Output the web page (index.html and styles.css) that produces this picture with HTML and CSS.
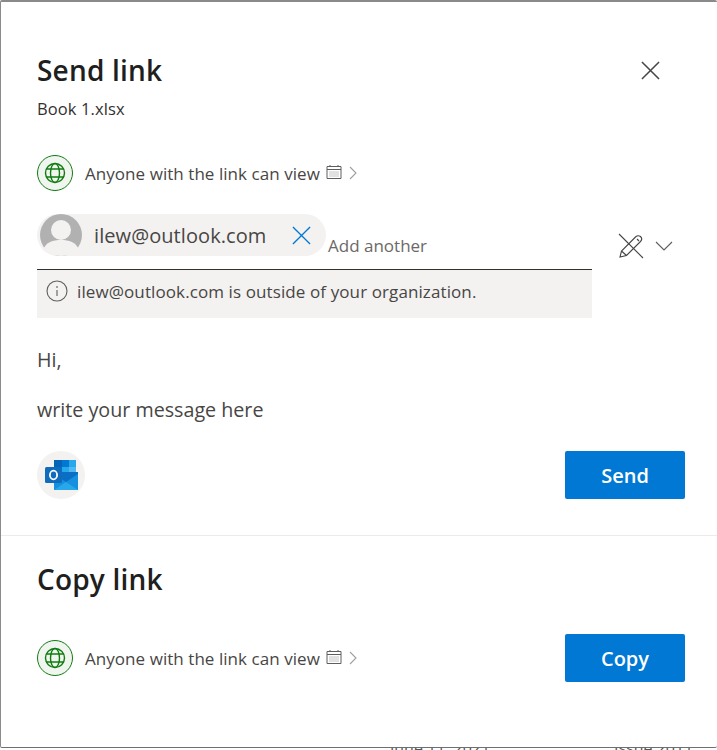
FILE: index.html
```html
<!DOCTYPE html>
<html lang="en">
<head>
  <meta charset="UTF-8">
  <title>Send link</title>
  <link rel="stylesheet" href="styles.css">
</head>
<body>

<div class="peek">
  <span class="peek-date">June 11, 2021</span>
  <span class="peek-issue">Issue 2011</span>
</div>

<div class="modal">

  <div class="send-section">
    <div class="title-row">
      <h1>Send link</h1>
      <svg class="close-icon" viewBox="0 0 20 20"><path d="M1 1L19 19M19 1L1 19"/></svg>
    </div>
    <div class="file-name">Book 1.xlsx</div>

    <div class="link-row">
      <svg class="globe" viewBox="0 0 36 36">
        <circle class="globe-bg" cx="18" cy="18" r="17.5"/>
        <g class="globe-lines">
          <circle cx="18" cy="18" r="9.5"/>
          <ellipse cx="18" cy="18" rx="4.5" ry="9.5"/>
          <path d="M9.5 14H26.5M9.5 22H26.5"/>
        </g>
      </svg>
      <span class="link-text">Anyone with the link can view</span>
      <svg class="calendar" viewBox="0 0 16 16">
        <path class="cal-frame" d="M1 2.5H15V14.5H1ZM1 5.5H15M4 1V3M12 1V3"/>
        <path class="cal-dots" d="M3.5 8H12.5M3.5 10H12.5M3.5 12H12.5" />
      </svg>
      <svg class="chevron-right" viewBox="0 0 8 14"><path d="M1 1L7 7L1 13"/></svg>
    </div>

    <div class="recipient-row">
      <div class="recipient-box">
        <div class="recipient-input">
          <div class="chip">
            <svg class="avatar" viewBox="0 0 42 42">
              <circle class="avatar-bg" cx="21" cy="21" r="21"/>
              <circle class="avatar-fg" cx="21" cy="16" r="10"/>
              <path class="avatar-fg" d="M3 36C6 28 13 26 21 26C29 26 36 28 39 36C34 40 28 42 21 42C14 42 8 40 3 36Z"/>
            </svg>
            <span class="chip-name">ilew@outlook.com</span>
            <svg class="chip-x" viewBox="0 0 20 20"><path d="M1 1L19 19M19 1L1 19"/></svg>
          </div>
          <span class="add-another">Add another</span>
        </div>
        <div class="notice">
          <svg class="info-icon" viewBox="0 0 22 22">
            <circle cx="11" cy="11" r="10"/>
            <path d="M11 10V16M11 6V8"/>
          </svg>
          <span>ilew@outlook.com is outside of your organization.</span>
        </div>
      </div>
      <div class="permission">
        <svg class="pencil" viewBox="0 0 26 26">
          <path d="M2 24L3.5 18L17.5 4C19 2.5 21 2.5 22.5 3.5C24 5 24 7 22.5 8.5L8.5 22.5ZM3.5 18L8.5 22.5M19 6L21 8"/>
          <path d="M1 1L25 25"/>
        </svg>
        <svg class="chevron-down" viewBox="0 0 18 10"><path d="M1 1L9 9L17 1"/></svg>
      </div>
    </div>

    <p class="message">Hi,</p>
    <p class="message message-body">write your message here</p>

    <div class="action-row">
      <div class="outlook-badge">
        <svg class="outlook" viewBox="0 0 33 30">
          <rect x="9" y="0" width="22" height="16" rx="1" fill="#0078d4"/>
          <rect x="9" y="0" width="8" height="7" fill="#0364b8"/>
          <rect x="24" y="0" width="7" height="7" fill="#28a8ea"/>
          <rect x="17" y="7" width="7" height="7" fill="#28a8ea"/>
          <rect x="24" y="7" width="7" height="7" fill="#50b8f0"/>
          <path d="M9 14L33 14V30H9Z" fill="#1490df"/>
          <path d="M9 14L21 22L33 14V12H9Z" fill="#0a6fc4"/>
          <path d="M9 30L21 22L33 30Z" fill="#28a8ea"/>
          <rect x="0" y="7" width="17" height="16" rx="1.5" fill="#0f6cbd"/>
          <ellipse class="outlook-o" cx="8.5" cy="15" rx="3.6" ry="4.3"/>
        </svg>
      </div>
      <button class="primary-btn">Send</button>
    </div>
  </div>

  <div class="copy-section">
    <h2>Copy link</h2>
    <div class="copy-row">
      <div class="link-row link-row-copy">
        <svg class="globe" viewBox="0 0 36 36">
          <circle class="globe-bg" cx="18" cy="18" r="17.5"/>
          <g class="globe-lines">
            <circle cx="18" cy="18" r="9.5"/>
            <ellipse cx="18" cy="18" rx="4.5" ry="9.5"/>
            <path d="M9.5 14H26.5M9.5 22H26.5"/>
          </g>
        </svg>
        <span class="link-text">Anyone with the link can view</span>
        <svg class="calendar" viewBox="0 0 16 16">
          <path class="cal-frame" d="M1 2.5H15V14.5H1ZM1 5.5H15M4 1V3M12 1V3"/>
          <path class="cal-dots" d="M3.5 8H12.5M3.5 10H12.5M3.5 12H12.5" />
        </svg>
        <svg class="chevron-right" viewBox="0 0 8 14"><path d="M1 1L7 7L1 13"/></svg>
      </div>
      <button class="primary-btn">Copy</button>
    </div>
  </div>

</div>

</body>
</html>
```

FILE: styles.css
```css
html, body {
  height: 100%;
}

body {
  margin: 0;
  background-color: #ffffff;
  font-family: "Open Sans", "Noto Sans", Arial, sans-serif;
  color: #323130;
  overflow: hidden;
  position: relative;
}

.peek {
  position: absolute;
  left: 0;
  right: 0;
  bottom: -9px;
  font-size: 16px;
  color: #555;
}

.peek-date {
  position: absolute;
  left: 390px;
  bottom: 0;
}

.peek-issue {
  position: absolute;
  left: 614px;
  bottom: 0;
}

.modal {
  position: relative;
  box-sizing: border-box;
  height: 748px;
  background: #fff;
  border-top: 2px solid #8a8a8a;
  border-left: 1px solid #8a8a8a;
  border-bottom: 1px solid #6f6f6f;
  border-radius: 2px;
}

.send-section {
  padding: 0 32px 0 36px;
  height: 534px;
  box-sizing: border-box;
  border-bottom: 1px solid #edebe9;
}

.title-row {
  display: flex;
  justify-content: space-between;
  align-items: center;
  height: 38px;
  padding-top: 49px;
  padding-right: 25px;
}

h1, h2 {
  margin: 0;
  font-size: 28px;
  line-height: 38px;
  font-weight: 600;
  letter-spacing: 0.2px;
  color: #201f1e;
}

.close-icon {
  width: 19px;
  height: 19px;
  fill: none;
  stroke: #484644;
  stroke-width: 1.6;
}

.file-name {
  margin-top: 9px;
  font-size: 16.5px;
  line-height: 22px;
  letter-spacing: 0.1px;
}

.link-row {
  display: flex;
  align-items: center;
  margin-top: 35px;
  height: 36px;
}

.link-row-copy {
  margin-top: 0;
}

.globe {
  width: 36px;
  height: 36px;
  flex-shrink: 0;
}

.globe-bg {
  fill: #f0f6ef;
  stroke: #107c10;
  stroke-width: 1;
}

.globe-lines {
  fill: none;
  stroke: #107c10;
  stroke-width: 1.4;
}

.link-text {
  margin-left: 12px;
  font-size: 17px;
  letter-spacing: 0.05px;
  color: #484644;
}

.calendar {
  width: 16px;
  height: 16px;
  margin-left: 6px;
  margin-top: -3px;
  fill: none;
}

.cal-frame {
  stroke: #605e5c;
  stroke-width: 1;
}

.cal-dots {
  stroke: #8a8886;
  stroke-width: 1;
  stroke-dasharray: 1 1;
}

.chevron-right {
  width: 8px;
  height: 14px;
  margin-left: 7px;
  fill: none;
  stroke: #a19f9d;
  stroke-width: 1.1;
}

.recipient-row {
  display: flex;
  margin-top: 24px;
}

.recipient-box {
  width: 555px;
}

.recipient-input {
  display: flex;
  align-items: flex-end;
  height: 55px;
  box-sizing: border-box;
  padding-bottom: 11px;
  border-bottom: 1px solid #323130;
}

.chip {
  display: flex;
  align-items: center;
  width: 289px;
  height: 42px;
  margin-bottom: 2px;
  flex-shrink: 0;
  background-color: #f3f2f1;
  border-radius: 21px;
  box-sizing: border-box;
  padding-left: 3px;
}

.avatar {
  width: 42px;
  height: 42px;
  flex-shrink: 0;
}

.avatar-bg {
  fill: #b1b1b1;
}

.avatar-fg {
  fill: #f3f2f1;
}

.chip-name {
  margin-left: 12px;
  font-size: 20px;
  letter-spacing: 0.08px;
  color: #484644;
}

.chip-x {
  width: 19px;
  height: 19px;
  margin-left: 26px;
  fill: none;
  stroke: #0078d4;
  stroke-width: 1.4;
}

.add-another {
  margin-left: 2px;
  margin-bottom: 2px;
  font-size: 17px;
  line-height: 20px;
  color: #6b6967;
}

.notice {
  display: flex;
  align-items: flex-start;
  height: 48px;
  box-sizing: border-box;
  padding: 11px 0 0 9px;
  background-color: #f3f2f1;
  font-size: 17px;
  line-height: 22px;
  letter-spacing: 0.1px;
  color: #484644;
}

.info-icon {
  width: 22px;
  height: 22px;
  margin-top: -1px;
  margin-right: 9px;
  flex-shrink: 0;
  fill: none;
  stroke: #605e5c;
  stroke-width: 1.1;
}

.permission {
  display: flex;
  align-items: center;
  height: 26px;
  margin-top: 18px;
  margin-left: 26px;
}

.pencil {
  width: 26px;
  height: 26px;
  fill: none;
  stroke: #484644;
  stroke-width: 1.1;
}

.chevron-down {
  width: 18px;
  height: 10px;
  margin-left: 11px;
  fill: none;
  stroke: #605e5c;
  stroke-width: 1.1;
}

.message {
  margin: 0;
  font-size: 19.7px;
  line-height: 26px;
  color: #484644;
  padding-top: 29px;
}

.message-body {
  padding-top: 24px;
}

.action-row {
  display: flex;
  justify-content: space-between;
  align-items: center;
  margin-top: 28px;
}

.outlook-badge {
  display: flex;
  align-items: center;
  justify-content: center;
  width: 48px;
  height: 48px;
  border-radius: 50%;
  background-color: #f3f2f1;
}

.outlook {
  width: 33px;
  height: 30px;
}

.outlook-o {
  fill: none;
  stroke: #fff;
  stroke-width: 1.8;
}

.primary-btn {
  width: 120px;
  height: 48px;
  border: none;
  border-radius: 2px;
  background-color: #0078d4;
  color: #fff;
  font-family: inherit;
  font-size: 20px;
  font-weight: 600;
}

.copy-section {
  padding: 24px 32px 0 36px;
}

.copy-row {
  display: flex;
  justify-content: space-between;
  align-items: center;
  margin-top: 36px;
}
```
